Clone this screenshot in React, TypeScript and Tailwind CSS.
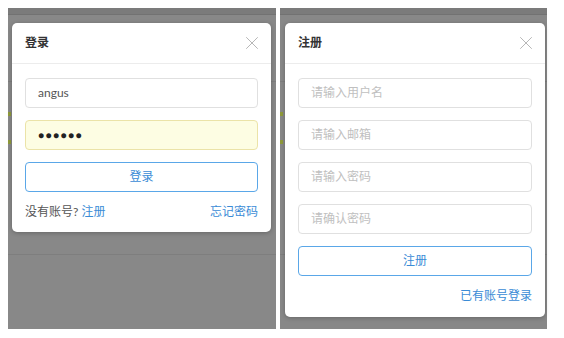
import { X } from "lucide-react";

const font = { fontFamily: 'Lato, "Noto Sans CJK SC", sans-serif' };

function PageBackdrop() {
  // 模态框后面被遮罩的页面
  return (
    <div className="flex flex-col h-full">
      <div className="h-[7px] bg-[#7b7b7b] border-b border-[#727272]" />
      <div className="h-[67px] border-b border-[#7e7e7e]" />
      <div className="flex flex-col gap-[24px] pt-[30px]">
        <div className="w-[3px] h-[4px] bg-[#8f9a3a]" />
        <div className="w-[3px] h-[4px] bg-[#8f9a3a]" />
      </div>
      <div className="mt-[110px] border-b border-[#7e7e7e]" />
    </div>
  );
}

function Field({ placeholder, value, filled }: { placeholder?: string; value?: string; filled?: boolean }) {
  return (
    <div
      className={
        filled
          ? "h-[30px] rounded-[4px] border border-[#ebe3a8] bg-[#fdfde3] px-3 flex items-center"
          : "h-[30px] rounded-[4px] border border-[#e0e0e0] bg-white px-3 flex items-center"
      }
    >
      {value ? (
        <span className="text-[12px] text-[#555]">{value}</span>
      ) : filled ? (
        <span className="text-[10px] text-[#222] tracking-[1.5px] leading-none">●●●●●●</span>
      ) : (
        <span className="text-[12px] text-[#c0c0c0]">{placeholder}</span>
      )}
    </div>
  );
}

function Header({ title }: { title: string }) {
  return (
    <div className="h-[41px] px-[13px] flex items-center justify-between border-b border-[#ececec]">
      <span className="text-[12px] font-bold text-[#333]">{title}</span>
      <X size={22} strokeWidth={0.9} className="text-[#a8a8a8] -mr-[5px]" />
    </div>
  );
}

function Button({ label }: { label: string }) {
  return (
    <div className="h-[30px] rounded-[4px] border border-[#5aa7e8] flex items-center justify-center text-[12px] text-[#3a8bd6]">
      {label}
    </div>
  );
}

export default function App() {
  return (
    <div className="w-[564px] h-[338px] bg-white flex gap-[4px] pl-[8px] pt-[8px]" style={font}>
      <div className="relative w-[268px] h-[321px] bg-[#888888]">
        <PageBackdrop />
        <div className="absolute left-[4px] top-[15px] w-[259px] bg-white rounded-[5px] shadow-[0_1px_4px_rgba(0,0,0,0.25)]">
          <Header title="登录" />
          <div className="px-[13px] pt-[14px] pb-[12px] flex flex-col gap-[12px]">
            <Field value="angus" />
            <Field filled />
            <Button label="登录" />
            <div className="flex items-center justify-between text-[12px] leading-[16px]">
              <span className="text-[#555]">
                没有账号? <span className="text-[#3a8bd6]">注册</span>
              </span>
              <span className="text-[#3a8bd6]">忘记密码</span>
            </div>
          </div>
        </div>
      </div>
      <div className="relative w-[267px] h-[321px] bg-[#888888]">
        <PageBackdrop />
        <div className="absolute left-[5px] top-[15px] w-[260px] bg-white rounded-[5px] shadow-[0_1px_4px_rgba(0,0,0,0.25)]">
          <Header title="注册" />
          <div className="px-[13px] pt-[14px] pb-[13px] flex flex-col gap-[12px]">
            <Field placeholder="请输入用户名" />
            <Field placeholder="请输入邮箱" />
            <Field placeholder="请输入密码" />
            <Field placeholder="请确认密码" />
            <Button label="注册" />
            <div className="flex justify-end text-[12px] leading-[16px] text-[#3a8bd6]">已有账号登录</div>
          </div>
        </div>
      </div>
    </div>
  );
}
